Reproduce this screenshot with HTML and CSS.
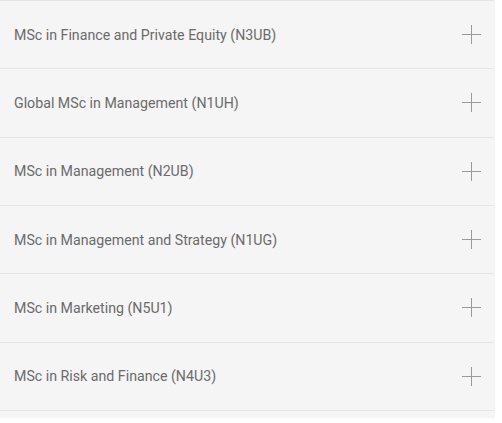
FILE: index.html
```html
<!DOCTYPE html>
<html>
<head>
<meta charset="utf-8">
<link rel="stylesheet" href="styles.css">
</head>
<body>
<div class="accordion">
  <div class="item"><span class="label">MSc in Finance and Private Equity (N3UB)</span><span class="plus"></span></div>
  <div class="item"><span class="label">Global MSc in Management (N1UH)</span><span class="plus"></span></div>
  <div class="item"><span class="label">MSc in Management (N2UB)</span><span class="plus"></span></div>
  <div class="item"><span class="label">MSc in Management and Strategy (N1UG)</span><span class="plus"></span></div>
  <div class="item"><span class="label">MSc in Marketing (N5U1)</span><span class="plus"></span></div>
  <div class="item"><span class="label">MSc in Risk and Finance (N4U3)</span><span class="plus"></span></div>
</div>
</body>
</html>
```
FILE: styles.css
```css
html, body {
  margin: 0;
  padding: 0;
  background: #ffffff;
}
.accordion {
  width: 495px;
  background: #f5f5f5;
  padding-bottom: 7px;
  font-family: Roboto, "Liberation Sans", sans-serif;
}
.item {
  box-sizing: border-box;
  height: 68.33px;
  width: 494px;
  border-top: 1px solid #e5e5e5;
  display: flex;
  align-items: center;
  justify-content: space-between;
  padding: 0 13px 0 14px;
}
.item:last-child {
  border-bottom: 1px solid #e5e5e5;
  height: 69.33px;
}
.label {
  font-size: 14.2px;
  color: #6b6b6b;
}
.plus {
  position: relative;
  width: 19px;
  height: 19px;
}
.plus::before, .plus::after {
  content: "";
  position: absolute;
  background: #9a9a9a;
}
.plus::before {
  left: 9px;
  top: 0;
  width: 1px;
  height: 19px;
}
.plus::after {
  top: 9px;
  left: 0;
  height: 1px;
  width: 19px;
}
```
